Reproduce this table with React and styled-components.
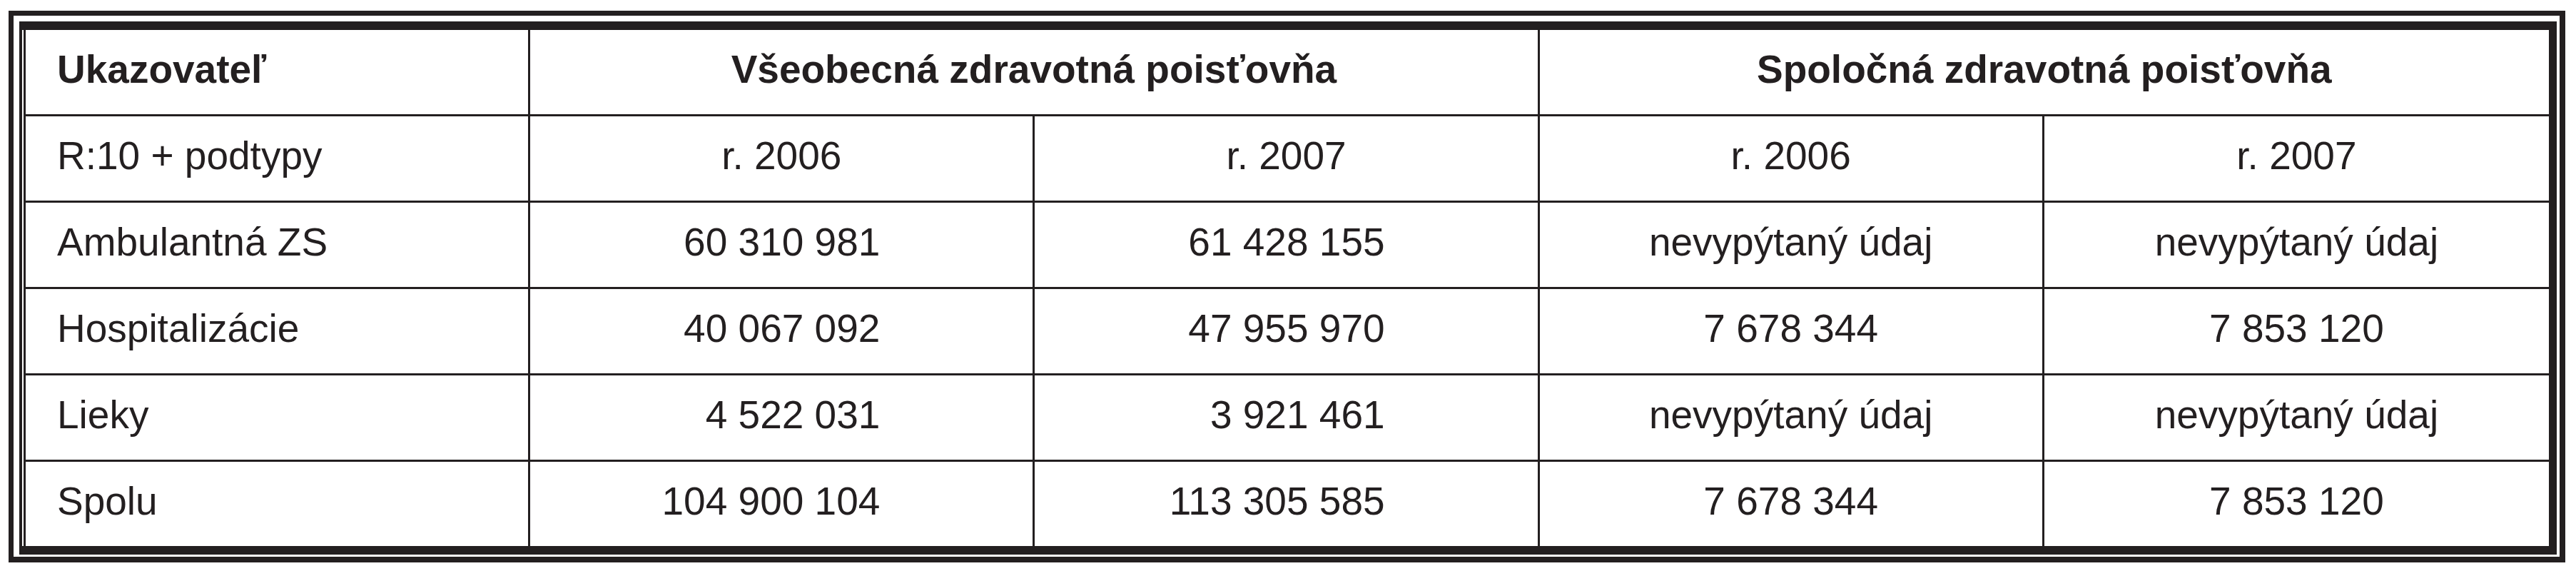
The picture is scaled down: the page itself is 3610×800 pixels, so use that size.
import React from 'react'
import styled, { createGlobalStyle } from 'styled-components'

const Ink = '#231f20'

const GlobalStyle = createGlobalStyle`
  html, body {
    margin: 0;
    padding: 0;
    background: #ffffff;
  }
  body {
    font-family: "Liberation Sans", Arial, sans-serif;
    color: ${Ink};
  }
`

const rows = [
  ['Ambulantná ZS', '60 310 981', '61 428 155', 'nevypýtaný údaj', 'nevypýtaný údaj'],
  ['Hospitalizácie', '40 067 092', '47 955 970', '7 678 344', '7 853 120'],
  ['Lieky', '4 522 031', '3 921 461', 'nevypýtaný údaj', 'nevypýtaný údaj'],
  ['Spolu', '104 900 104', '113 305 585', '7 678 344', '7 853 120'],
]

export default function App() {
  return (
    <>
      <GlobalStyle />
      <Frame>
        <Box>
          <Grid>
            <Cell $bold>Ukazovateľ</Cell>
            <Cell $bold $align="center" $span={2}>Všeobecná zdravotná poisťovňa</Cell>
            <Cell $bold $align="center" $span={2} $lastCol>Spoločná zdravotná poisťovňa</Cell>

            <Cell>R:10 + podtypy</Cell>
            <Cell $align="center">r. 2006</Cell>
            <Cell $align="center">r. 2007</Cell>
            <Cell $align="center">r. 2006</Cell>
            <Cell $align="center" $lastCol>r. 2007</Cell>

            {rows.map((row, i) => {
              const lastRow = i === rows.length - 1
              return (
                <React.Fragment key={row[0]}>
                  <Cell $lastRow={lastRow}>{row[0]}</Cell>
                  <Cell $align="right" $lastRow={lastRow}>{row[1]}</Cell>
                  <Cell $align="right" $lastRow={lastRow}>{row[2]}</Cell>
                  <Cell $align="center" $lastRow={lastRow}>{row[3]}</Cell>
                  <Cell $align="center" $lastRow={lastRow} $lastCol>{row[4]}</Cell>
                </React.Fragment>
              )
            })}
          </Grid>
        </Box>
      </Frame>
    </>
  )
}

const Frame = styled.div`
  box-sizing: border-box;
  width: 3583px;
  margin: 15px 0 0 12px;
  padding: 8px 4px 3px 8px;
  border-style: solid;
  border-color: ${Ink};
  border-width: 7px 8px 8px 7px;
`

const Box = styled.div`
  padding-left: 2px;
  border-style: solid;
  border-color: ${Ink};
  border-width: 12px 11px 12px 4px;
`

const Grid = styled.div`
  display: grid;
  grid-template-columns: repeat(5, 1fr);
  border-left: 3px solid ${Ink};
`

const justify = {
  left: 'flex-start',
  center: 'center',
  right: 'flex-end',
}

const Cell = styled.div`
  box-sizing: border-box;
  display: flex;
  align-items: center;
  justify-content: ${(p) => justify[p.$align || 'left']};
  grid-column: span ${(p) => p.$span || 1};
  height: ${(p) => (p.$lastRow ? 118 : 121)}px;
  padding: 0 0 8px 0;
  padding-left: ${(p) => (!p.$align || p.$align === 'left' ? 44 : 0)}px;
  padding-right: ${(p) => (p.$align === 'right' ? 214 : 0)}px;
  border-right: ${(p) => (p.$lastCol ? 'none' : `3px solid ${Ink}`)};
  border-bottom: ${(p) => (p.$lastRow ? 'none' : `3px solid ${Ink}`)};
  font-size: 55px;
  font-weight: ${(p) => (p.$bold ? 700 : 400)};
  white-space: nowrap;
`
